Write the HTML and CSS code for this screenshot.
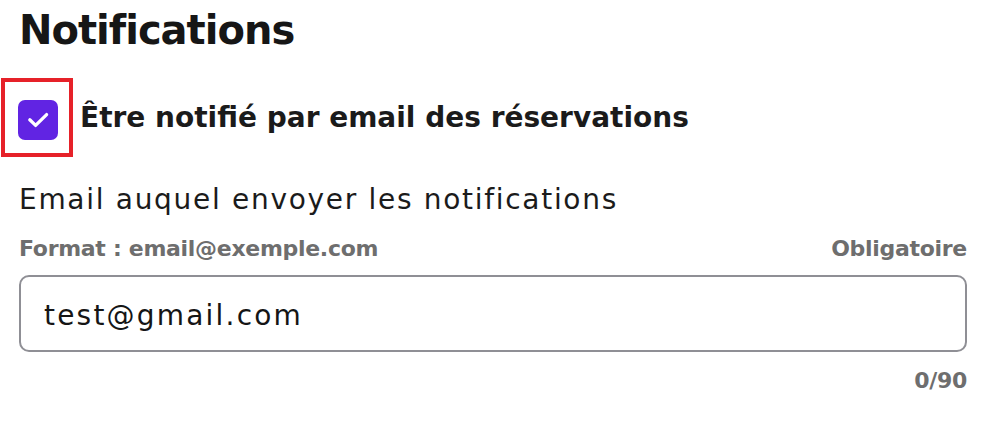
FILE: index.html
```html
<!DOCTYPE html>
<html lang="fr">
<head>
<meta charset="utf-8">
<title>Notifications</title>
<link rel="stylesheet" href="styles.css">
</head>
<body>
<section class="panel">
  <h2 class="panel-title">Notifications</h2>

  <label class="toggle-row">
    <span class="focus-ring">
      <span class="checkbox">
        <svg viewBox="0 0 40 40" width="40" height="40" aria-hidden="true">
          <polyline points="11.8,19.8 17.6,25.4 28.6,14.6" fill="none" stroke="#fff" stroke-width="3.3" stroke-linecap="round" stroke-linejoin="round"/>
        </svg>
      </span>
    </span>
    <span class="toggle-label">Être notifié par email des réservations</span>
  </label>

  <div class="field">
    <div class="field-label">Email auquel envoyer les notifications</div>
    <div class="field-meta">
      <span>Format : email@exemple.com</span>
      <span>Obligatoire</span>
    </div>
    <div class="input-box">test@gmail.com</div>
    <div class="field-count">0/90</div>
  </div>
</section>
</body>
</html>
```

FILE: styles.css
```css
html, body {
  margin: 0;
  padding: 0;
  background: #ffffff;
}

body {
  font-family: "DejaVu Sans", "Open Sans", sans-serif;
  color: #1b1b1b;
}

.panel {
  width: 948px;
  padding: 6px 36px 0 19px;
}

.panel-title {
  margin: 0;
  font-size: 40px;
  line-height: 48px;
  font-weight: 700;
  letter-spacing: -1px;
  color: #161616;
}

.toggle-row {
  display: flex;
  align-items: center;
  margin-top: 24px;
  margin-left: -18px;
}

/* keyboard focus frame around the checkbox */
.focus-ring {
  box-sizing: border-box;
  width: 72px;
  height: 79px;
  border: 4px solid #e62129;
  padding: 18px 0 0 13px;
}

.checkbox {
  display: block;
  width: 40px;
  height: 40px;
  border-radius: 7px;
  background: #6124e3;
}

.checkbox svg {
  display: block;
}

.toggle-label {
  margin-left: 7px;
  font-size: 28px;
  line-height: 34px;
  font-weight: 700;
  color: #1b1b1b;
}

.field {
  margin-top: 26px;
}

.field-label {
  font-size: 28px;
  line-height: 34px;
  letter-spacing: 1.7px;
  color: #1b1b1b;
}

.field-meta {
  display: flex;
  justify-content: space-between;
  margin-top: 19px;
  font-size: 22px;
  line-height: 26px;
  font-weight: 700;
  letter-spacing: -0.3px;
  color: #6e6e6e;
}

.input-box {
  box-sizing: border-box;
  margin-top: 13px;
  height: 77px;
  border: 2px solid #8f8f95;
  border-radius: 10px;
  padding: 4px 23px 0;
  display: flex;
  align-items: center;
  font-size: 28px;
  line-height: 34px;
  letter-spacing: 2.2px;
  color: #151515;
}

.field-count {
  margin-top: 16px;
  text-align: right;
  font-size: 22px;
  line-height: 26px;
  font-weight: 700;
  letter-spacing: -0.3px;
  color: #6e6e6e;
}
```
